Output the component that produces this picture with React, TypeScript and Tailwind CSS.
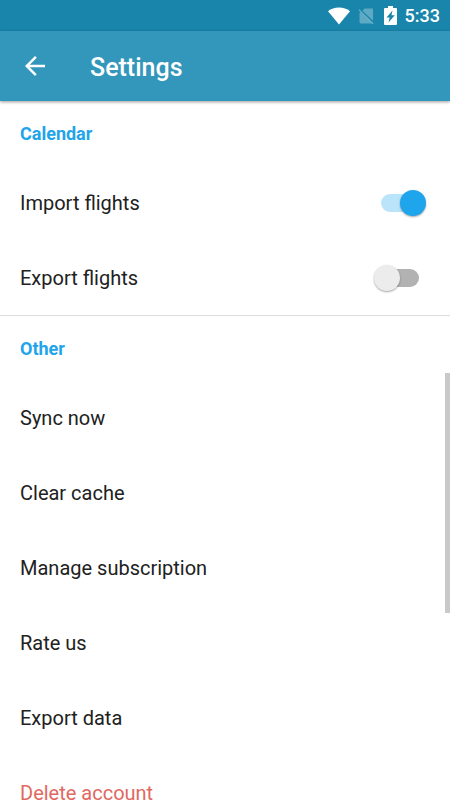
import React, { useState } from 'react';

interface SwitchRowProps {
  id: string;
  label: string;
  checked: boolean;
  onChange: (checked: boolean) => void;
}

const actions = [
  { label: 'Sync now', danger: false },
  { label: 'Clear cache', danger: false },
  { label: 'Manage subscription', danger: false },
  { label: 'Rate us', danger: false },
  { label: 'Export data', danger: false },
  { label: 'Delete account', danger: true },
];

const SectionTitle = ({ title }: { title: string }) => (
  <h2 className="flex h-16 items-center px-5 pt-[2px] text-lg font-bold text-[#22a4ea]">{title}</h2>
);

const SwitchRow: React.FC<SwitchRowProps> = ({ id, label, checked, onChange }) => (
  <div className="flex h-[75px] items-center justify-between pl-5 pr-6">
    <label htmlFor={id} className="text-xl text-[#212121]">{label}</label>
    <div className="relative h-[26px] w-[52px]">
      <input
        id={id}
        type="checkbox"
        role="switch"
        checked={checked}
        onChange={e => onChange(e.target.checked)}
        className="peer absolute inset-0 z-10 cursor-pointer opacity-0"
      />
      <span className="absolute inset-x-[7px] inset-y-1 rounded-full bg-[#b2b2b2] peer-checked:bg-[#bae4fa]"></span>
      <span className="absolute left-0 top-0 size-[26px] rounded-full bg-[#ececec] shadow-[0_1px_2px_rgba(0,0,0,0.35)] peer-checked:left-[26px] peer-checked:bg-[#1fa5eb]"></span>
    </div>
  </div>
);

const StatusBar = () => (
  <div className="flex h-[31px] shrink-0 items-center justify-end bg-[#1985ab] pr-[10px] text-white">
    <svg className="mr-2 h-[18px] w-[22px]" viewBox="0 0 22 18" fill="currentColor">
      <path d="M11 17.5 0 4.2C3 1.9 6.8.6 11 .6s8 1.3 11 3.600z" />
    </svg>
    <svg className="mr-[10px] h-[18px] w-4" viewBox="0 0 16 18" fill="currentColor">
      <path opacity="0.3" d="M15 1.500v12.200L4.500 3.700 6.500 1.500zM1.500 6l1-1L14 16.500H3a1.500 1.500 0 0 1-1.500-1.500z" />
      <path opacity="0.4" d="M1.200 2.200.5 3l14.200 14.200.8-.8z" />
    </svg>
    <svg className="mr-2 h-[19px] w-[13px]" viewBox="0 0 13 19" fill="currentColor">
      <path fillRule="evenodd" d="M4 0h5v2h3a1 1 0 0 1 1 1v15a1 1 0 0 1-1 1H1a1 1 0 0 1-1-1V3a1 1 0 0 1 1-1h3zM8.500 4.500 2.500 11.500h3.100L4.500 16.500 10.800 9.300H7.500z" />
    </svg>
    <span className="text-lg font-medium">5:33</span>
  </div>
);

const App: React.FC = () => {
  const [importFlights, setImportFlights] = useState(true);
  const [exportFlights, setExportFlights] = useState(false);

  return (
    <div className="flex h-screen flex-col overflow-hidden bg-white font-[Roboto,sans-serif]">
      <StatusBar />
      <header className="z-10 flex h-[70px] shrink-0 items-center bg-[#3396bb] pl-5 text-white shadow-[0_1px_3px_rgba(0,0,0,0.4)]">
        <button type="button" aria-label="Back" className="flex size-[30px] items-center justify-center">
          <svg className="size-[30px]" viewBox="0 0 24 24" fill="currentColor">
            <path d="M20 11H7.830l5.590-5.590L12 4l-8 8 8 8 1.410-1.410L7.830 13H20v-2z" />
          </svg>
        </button>
        <h1 className="ml-10 pt-1 text-[25px] font-medium">Settings</h1>
      </header>

      <main className="relative min-h-0 flex-1 overflow-hidden">
        <section className="border-b border-[#dddddd]">
          <SectionTitle title="Calendar" />
          <SwitchRow id="import-flights" label="Import flights" checked={importFlights} onChange={setImportFlights} />
          <SwitchRow id="export-flights" label="Export flights" checked={exportFlights} onChange={setExportFlights} />
        </section>

        <section>
          <SectionTitle title="Other" />
          {actions.map(a => (
            <button
              key={a.label}
              type="button"
              className={`flex h-[75px] w-full items-center px-5 text-left text-xl ${a.danger ? 'text-[#e0695f]' : 'text-[#212121]'}`}
            >
              {a.label}
            </button>
          ))}
        </section>

        <div className="absolute right-0 top-[272px] h-60 w-[5px] bg-[#c9c9c9]"></div>
      </main>
    </div>
  );
};

export default App;
